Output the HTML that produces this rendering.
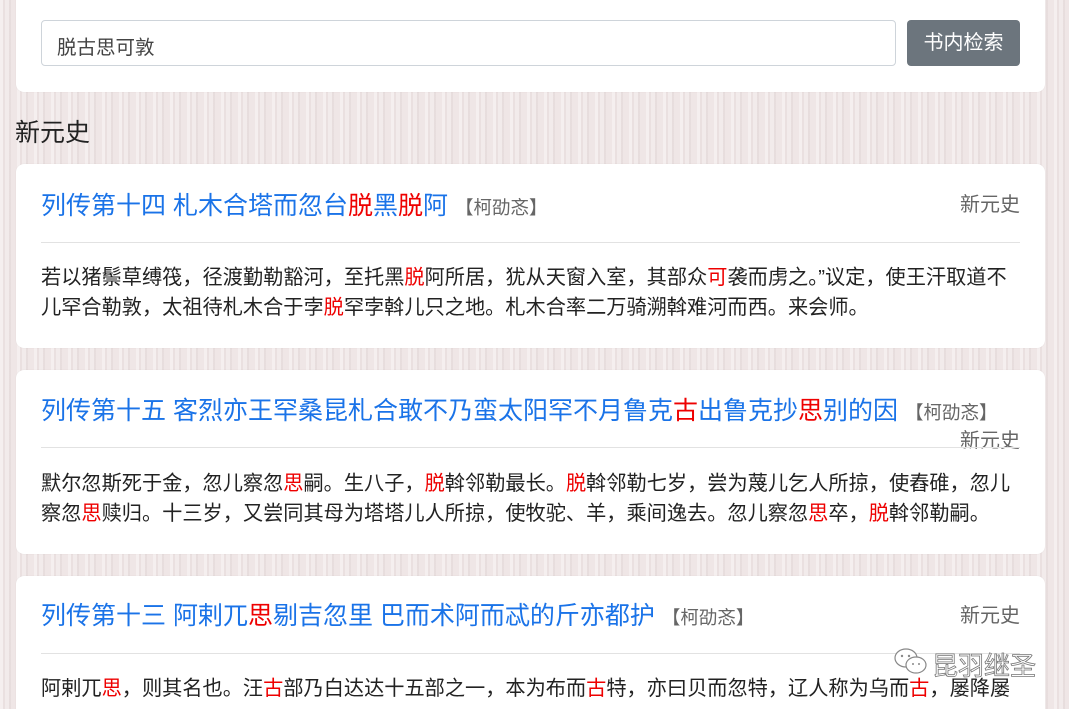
<!DOCTYPE html>
<html style="overflow:hidden;height:709px"><head><meta charset="utf-8"><style>
body{margin:0;width:1069px;height:709px;overflow:hidden;position:relative;font-family:"Liberation Sans","Noto Sans CJK SC",sans-serif;
background:#efe6e6;background-image:repeating-linear-gradient(90deg,rgba(255,255,255,.35) 0 3px,rgba(200,180,180,.12) 3px 5px,rgba(255,255,255,.2) 5px 9px,rgba(190,170,170,.15) 9px 11px,rgba(255,255,255,0) 11px 17px);}
.card{position:absolute;left:16px;width:1029px;background:#fff;border-radius:8px;box-shadow:0 0 1px rgba(0,0,0,.1)}
.abs{position:absolute;white-space:nowrap}
.t{left:25px;font-size:25px;color:#1a73e8;line-height:30px}
.t small{font-size:18.5px;color:#666}
.src{right:25px;font-size:20px;color:#666;line-height:24px}
.hr{left:25px;right:25px;height:1px;background:#e2e2e2}
.p{left:25px;font-size:20.2px;color:#222;line-height:30px}
.r{color:#e00}
</style></head><body>
<div class="card" style="top:-10px;height:102px">
 <div class="abs" style="left:25px;top:30px;width:853px;height:44px;border:1px solid #ced4da;border-radius:4px"></div>
 <div class="abs" style="left:41px;top:41px;font-size:19.5px;color:#444">脱古思可敦</div>
 <div class="abs" style="left:891px;top:30px;width:113px;height:46px;background:#6c757d;border-radius:4px;color:#fff;font-size:20px;line-height:46px;text-align:center">书内检索</div>
</div>
<div class="abs" style="left:15px;top:113px;font-size:25px;color:#222">新元史</div>

<div class="card" style="top:164px;height:184px">
 <div class="abs t" style="top:27px">列传第十四 札木合塔而忽台<span class="r">脱</span>黑<span class="r">脱</span>阿 <small>【柯劭忞】</small></div>
 <div class="abs src" style="top:29px">新元史</div>
 <div class="abs hr" style="top:78px"></div>
 <div class="abs p" style="top:99px">若以猪鬃草缚筏，径渡勤勒豁河，至托黑<span class="r">脱</span>阿所居，犹从天窗入室，其部众<span class="r">可</span>袭而虏之。”议定，使王汗取道不<br>儿罕合勒敦，太祖待札木合于孛<span class="r">脱</span>罕孛斡儿只之地。札木合率二万骑溯斡难河而西。来会师。</div>
</div>

<div class="card" style="top:370px;height:184px">
 <div class="abs t" style="top:26px">列传第十五 客烈亦王罕桑昆札合敢不乃蛮太阳罕不月鲁克<span class="r">古</span>出鲁克抄<span class="r">思</span>别的因 <small>【柯劭忞】</small></div>
 <div class="abs src" style="top:59px">新元史</div>
 <div class="abs hr" style="top:77px"></div>
 <div class="abs p" style="top:99px">默尔忽斯死于金，忽儿察忽<span class="r">思</span>嗣。生八子，<span class="r">脱</span>斡邻勒最长。<span class="r">脱</span>斡邻勒七岁，尝为蔑儿乞人所掠，使舂碓，忽儿<br>察忽<span class="r">思</span>赎归。十三岁，又尝同其母为塔塔儿人所掠，使牧驼、羊，乘间逸去。忽儿察忽<span class="r">思</span>卒，<span class="r">脱</span>斡邻勒嗣。</div>
</div>

<div class="card" style="top:576px;height:160px">
 <div class="abs t" style="top:25px">列传第十三 阿剌兀<span class="r">思</span>剔吉忽里 巴而术阿而忒的斤亦都护 <small>【柯劭忞】</small></div>
 <div class="abs src" style="top:28px">新元史</div>
 <div class="abs hr" style="top:77px"></div>
 <div class="abs p" style="top:98px">阿剌兀<span class="r">思</span>，则其名也。汪<span class="r">古</span>部乃白达达十五部之一，本为布而<span class="r">古</span>特，亦曰贝而忽特，辽人称为乌而<span class="r">古</span>，屡降屡</div>
</div>
<svg class="abs" style="left:893px;top:646px" width="36" height="30" viewBox="0 0 36 30"><g fill="#fff" stroke="#888" stroke-width="1.2"><ellipse cx="13" cy="12" rx="11" ry="9"/><ellipse cx="23" cy="19" rx="10" ry="8"/></g><g fill="#888"><circle cx="9" cy="10" r="1.2"/><circle cx="16" cy="10" r="1.2"/><circle cx="20" cy="18" r="1"/><circle cx="26" cy="18" r="1"/></g></svg>
<div class="abs" style="left:932px;top:646px;font-size:26px;color:#fff;-webkit-text-stroke:0.8px #777">昆羽继圣</div>
</body></html>
